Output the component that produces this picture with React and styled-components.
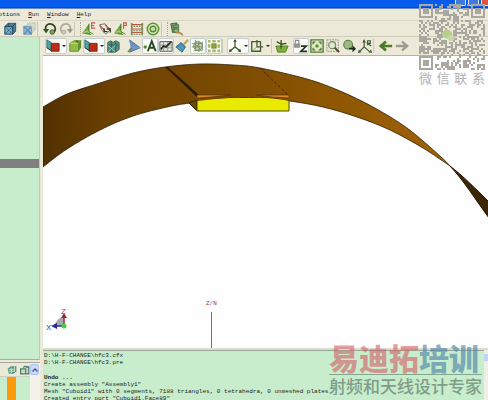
import React from 'react';
import styled, { createGlobalStyle, css } from 'styled-components';

const GlobalStyle = createGlobalStyle`
    * { box-sizing: border-box; }
    body { margin: 0; background: #ece9d8; overflow: hidden; }
    button { font: inherit; color: inherit; margin: 0; padding: 0; border: 0; background: none; }
`;

/* ---------- toolbar icons ---------- */

const Icon = ({ children }) => (
    <svg width="14" height="14" viewBox="0 0 16 16" fill="none" aria-hidden="true">{children}</svg>
);

const cubeIcon = (
    <Icon>
        <path d="M2 5l4-3.500h8.500v9L11 14H2z" fill="#4f7f9d" stroke="#2c5068" />
        <path d="M2 5h9v9M11 5l3.500-3.500M6 1.500v3.500" stroke="#27485c" />
        <path d="M3 6h7v7H3z" fill="#79aecb" />
        <path d="M3 6l7 7M10 6l-7 7M12 5v7" stroke="#33627e" />
    </Icon>
);
const meshCubeIcon = (
    <Icon>
        <path d="M5 4l3-3h7v8l-3 3H5z" fill="#d3dcd8" stroke="#c5c4a2" />
        <path d="M2 5h9v9H2z" fill="#8fb6d6" stroke="#6d96ba" />
        <path d="M2 5l9 9M11 5l-9 9" stroke="#5f8bb2" strokeWidth="1.400" />
        <path d="M6 1l9 8" stroke="#b9cbd2" />
    </Icon>
);
const undoIcon = (
    <Icon>
        <path d="M3 9C2 3 7 1 11 3s4 7 1 9" stroke="#33452a" strokeWidth="2" />
        <path d="M0 8h7l-3.500 5z" fill="#31591f" />
        <circle cx="10.500" cy="11.500" r="2.600" fill="#7ba856" stroke="#41582f" />
    </Icon>
);
const redoIcon = (
    <Icon>
        <path d="M13 9C14 3 9 1 5 3s-4 7-1 9" stroke="#aaa99e" strokeWidth="2" />
        <path d="M9 8h7l-3.500 5z" fill="#999a91" />
        <circle cx="5.500" cy="11.500" r="2.400" fill="#c6c5b9" stroke="#aaa99e" />
    </Icon>
);
const FieldIcon = ({ mark }) => (
    <Icon>
        <path d="M0 13L8 2v9l3 4z" fill="#5f9a2e" />
        <path d="M2 10l6 2M4 7l4 4M1 13l7-3" stroke="#b7d48d" />
        <path d="M8 2v9l5 3" stroke="#43751f" />
        {mark === 'E'
            ? <path d="M15 1h-4v6h4M11 4h3" stroke="#c9564d" strokeWidth="1.300" />
            : <path d="M11 8V1h3v3h-3" stroke="#c9564d" strokeWidth="1.300" />}
    </Icon>
);
const currentIcon = (
    <Icon>
        <path d="M2 3l6-1 6 7-5 5-5-5z" fill="#f4f1e6" stroke="#6c6b64" />
        <path d="M2 4l6 6M8 3l5 6" stroke="#b4574e" strokeWidth="1.400" />
        <path d="M7 7v4h4M10 8h4v4" stroke="#39342f" strokeWidth="1.500" />
    </Icon>
);
const gridLinesIcon = (
    <Icon>
        <path d="M2 1v14M14 1v14" stroke="#77925a" strokeWidth="2" />
        <path d="M2 3h12M2 8h12M2 12h12" stroke="#b45d3e" strokeWidth="1.300" />
        <path d="M4 5h8M4 10h8M4 14h8" stroke="#5c6d47" strokeDasharray="2 1" />
    </Icon>
);
const targetIcon = (
    <Icon>
        <circle cx="8" cy="8" r="6.500" stroke="#5c9436" strokeWidth="1.800" fill="#e3ecc8" />
        <circle cx="8" cy="8" r="3.200" stroke="#4e872a" strokeWidth="1.600" />
        <circle cx="8" cy="8" r="1" fill="#a2c77a" />
    </Icon>
);
const serverIcon = (
    <Icon>
        <path d="M2 2l7-1v10l-5 1z" fill="#6e9a5c" stroke="#3e5c34" />
        <path d="M5 4l6-1v9H6z" fill="#93b67f" stroke="#486a3b" />
        <path d="M6 6h4M6 8h4" stroke="#38532f" />
        <path d="M8 12h4l4 3" stroke="#ad8b4d" strokeWidth="2" />
    </Icon>
);
const planeIcon = (
    <Icon>
        <path d="M1 1l5 3v9l-5-3z" fill="#4ca7a0" stroke="#276b68" />
        <path d="M6 5h9v9H6z" fill="#bb2d18" stroke="#7c2113" />
        <path d="M1 10l6 4" stroke="#333" />
    </Icon>
);
const greenBoxIcon = (
    <Icon>
        <path d="M2 5l5-3h8l-3 3v9H2z" fill="#91bb45" stroke="#608b2b" />
        <path d="M12 5l3-3v8l-3 4z" fill="#628d2a" />
        <path d="M2 5h10" stroke="#c6dd87" />
        <path d="M9 2l3 2" stroke="#47731d" strokeWidth="2" />
    </Icon>
);
const meshedIcon = (
    <Icon>
        <path d="M2 4l3-2 3 2 3-2 4 2v8l-4 3H2z" fill="#548f80" stroke="#345e52" />
        <path d="M2 7h12M6 3v12M11 4v11" stroke="#2f5c50" />
        <path d="M2 7l9 8M11 7l-9 8" stroke="#a3ccd7" />
    </Icon>
);
const wedgeIcon = (
    <Icon>
        <path d="M3 1l12 9-12 5 2-5z" fill="#6e91bf" stroke="#4a6da0" />
        <path d="M3 1l2 9 10 0" stroke="#7f9dc8" />
        <path d="M1 15l4-5" stroke="#6a8a4e" strokeWidth="1.500" />
    </Icon>
);
const letterIcon = (
    <Icon>
        <circle cx="2.500" cy="9" r="2" fill="#588a33" />
        <path d="M5.500 14L10 2.500 14.500 14M7 10h6" stroke="#294a1d" strokeWidth="2.200" />
    </Icon>
);
const chartIcon = (
    <Icon>
        <path d="M1 3h14v11H1z" fill="#e6e9df" stroke="#454b42" />
        <path d="M1 7h14M1 10h14M5 3v11M10 3v11" stroke="#8b9386" />
        <path d="M2 12l3-4 3 1 6-6" stroke="#293027" strokeWidth="2" />
    </Icon>
);
const brushIcon = (
    <Icon>
        <path d="M10 6l5-5" stroke="#c4a362" strokeWidth="2.500" />
        <path d="M7 4l5 5-4 6-7-6z" fill="#418bb2" stroke="#2b6288" />
        <path d="M3 9l5 4M5 7l5 4" stroke="#78b4d1" />
    </Icon>
);
const globeGridIcon = (
    <Icon>
        <circle cx="8" cy="8" r="5" fill="#c5d7a9" stroke="#5e8946" />
        <path d="M1 5h12M1 9h13M3 13h10M5 1v13M9 2v13M13 3v10" stroke="#6b9278" />
        <path d="M4 5l7 7M11 4l-7 7" stroke="#ac7651" />
    </Icon>
);
const dotsIcon = (
    <Icon>
        <path d="M1 1h3v3H1zM6 1h4v3H6zM12 1h3v3h-3zM1 6h3v4H1zM12 6h3v4h-3zM1 12h3v3H1zM6 12h4v3H6zM12 12h3v3h-3z" fill="#a4bb65" />
        <path d="M5 5h6v6H5z" fill="#629042" />
        <path d="M5 8h6M8 5v6" stroke="#d3a147" />
    </Icon>
);
const axesIcon = (
    <Icon>
        <path d="M8 1v8M8 9l-6 5M8 9l6 5" stroke="#426334" strokeWidth="1.500" />
        <path d="M6 3l2-3 2 3zM1 15l1-4 3 3zM15 15l-1-4-3 3z" fill="#34502a" />
    </Icon>
);
const cornerIcon = (
    <Icon>
        <path d="M2 3h10v11H2z" fill="#eceedb" stroke="#455b32" strokeWidth="1.500" />
        <path d="M8 1v8h7" stroke="#455b32" strokeWidth="1.500" />
        <path d="M2 14l6-5" stroke="#779b52" />
    </Icon>
);
const workplaneIcon = (
    <Icon>
        <path d="M1 8h14l-3 7H3z" fill="#7fae3d" stroke="#537e25" />
        <path d="M7 11V1M7 6L2 3M7 6l6-1" stroke="#37511f" strokeWidth="1.500" />
    </Icon>
);
const lockIcon = (
    <Icon>
        <path d="M0 5h7v5H0z" fill="#8f958d" />
        <path d="M1.500 5V1.500h4V5" stroke="#878d86" strokeWidth="1.300" />
        <path d="M8 8h6l-6 6h7" stroke="#24331e" strokeWidth="2" />
    </Icon>
);
const zoomExtentIcon = (
    <Icon>
        <path d="M1 1h14v14H1z" fill="#dfe9c3" stroke="#557d38" strokeWidth="1.600" />
        <path d="M3.500 6V3.500H6M10 3.500h2.500V6M12.500 10v2.500H10M6 12.500H3.500V10" stroke="#487130" strokeWidth="1.400" />
        <circle cx="8" cy="8" r="2" fill="#5d9138" />
    </Icon>
);
const zoomBoxIcon = (
    <Icon>
        <path d="M1 1h13v13H1z" stroke="#7f8a66" strokeDasharray="2 1" />
        <circle cx="7" cy="7" r="4" fill="#dbe6cf" stroke="#6f8965" strokeWidth="1.300" />
        <path d="M10 10l5 5" stroke="#51443a" strokeWidth="2.200" />
    </Icon>
);
const zoomBallIcon = (
    <Icon>
        <circle cx="7" cy="6.500" r="5" fill="#9bbb81" stroke="#557c3f" strokeWidth="1.200" />
        <path d="M8 10h4V7l4 4-4 4v-3H8z" fill="#20271c" />
    </Icon>
);
const rotateIcon = (
    <Icon>
        <path d="M7 2v7L1 15M7 9l7 6M11 7V2h3v3h-3l4 3" stroke="#3c5f36" strokeWidth="1.400" />
        <path d="M5 4l2-4 2 4zM0 16l1-4 3 3zM16 16l-1-4-3 3z" fill="#3c5f36" />
    </Icon>
);
const backIcon = <Icon><path d="M15 8H3M8 3L2 8l6 5" stroke="#4c7b25" strokeWidth="3" /></Icon>;
const forwardIcon = <Icon><path d="M1 8h12M8 3l6 5-6 5" stroke="#9b9b91" strokeWidth="2.600" /></Icon>;

/* ---------- 3D scene ---------- */

// smooth curve through a list of points
function curve(pts) {
    let d = '';
    for (let i = 0; i < pts.length - 1; i++) {
        const [p0, p1, p2, p3] = [pts[i - 1] || pts[i], pts[i], pts[i + 1], pts[i + 2] || pts[i + 1]];
        d += `C${p1[0] + (p2[0] - p0[0]) / 6} ${p1[1] + (p2[1] - p0[1]) / 6} ${p2[0] - (p3[0] - p1[0]) / 6} ${p2[1] - (p3[1] - p1[1]) / 6} ${p2[0]} ${p2[1]}`;
    }
    return d;
}

const upper = [[43, 107], [67, 94], [100, 83], [133, 73], [165, 67], [200, 64], [233, 65], [260, 68], [307, 79], [340, 91], [373, 107], [407, 128], [440, 156], [450, 166]];
const lower = [[450, 166], [423, 148], [390, 130], [357, 117], [323, 107], [290, 101], [265, 98], [230, 98], [190, 103], [167, 107], [133, 116], [100, 130], [67, 149], [43, 167]];
const band = `M43 107${curve(upper)}${curve(lower)}Z`;

function Scene() {
    return (
        <SceneSvg viewBox="43 56 445 292" preserveAspectRatio="xMinYMin slice" role="img" aria-label="3D view">
            <defs>
                <linearGradient id="copper" x1="43" y1="150" x2="450" y2="150" gradientUnits="userSpaceOnUse">
                    <stop offset="0" stopColor="#523100" />
                    <stop offset="0.160" stopColor="#6b4000" />
                    <stop offset="0.450" stopColor="#7b4b02" />
                    <stop offset="0.700" stopColor="#8d5602" />
                    <stop offset="1" stopColor="#a16309" />
                </linearGradient>
            </defs>
            <path d={band} fill="url(#copper)" stroke="#2c1c05" strokeWidth="0.800" />
            <path d="M450 166C463 176 476 189 489 202V218C475 199 464 181 450 166Z" fill="#3d2605" stroke="#211403" />
            <path d="M189 103L197 100V111Z" fill="#6a4a08" stroke="#36270a" />
            <path d="M165 67L168 67L199 95L197 97Z" fill="#2c1b05" />
            <path d="M260 68L289 96" stroke="#3b250a" strokeDasharray="3 2" />
            <path d="M197 111V101Q212 99 230 98H265Q280 99 289 101V111Z" fill="#e9ea00" />
            <path d="M197 100V111H289V100" fill="none" stroke="#4a4907" />
            <path d="M197 98V95H231L211 97ZM289 98V95H256L272 97Z" fill="#dd8b2a" stroke="#5a350a" strokeWidth="0.700" />
            <text x="206" y="305" fill="#a33439" fontFamily="'Liberation Mono', monospace" fontSize="6">Z/N</text>
            <path d="M211.500 312V348" stroke="#bb535a" />
            <path d="M55 326A9 9 0 0 1 64 317V326Z" fill="#a8a8b0" />
            <path d="M64 326H54" stroke="#3434a0" strokeWidth="1.600" />
            <path d="M57 323V329L51 326Z" fill="#292995" />
            <path d="M64 326V316" stroke="#a73338" strokeWidth="1.600" />
            <path d="M61 318H67L64 313Z" fill="#942a30" />
            <circle cx="64" cy="326" r="2.500" fill="#45cf4a" />
            <text x="46" y="330" fill="#3636a5" fontFamily="'Liberation Sans', sans-serif" fontSize="8">X</text>
            <text x="61" y="314" fill="#bd4247" fontFamily="'Liberation Sans', sans-serif" fontSize="8">Z</text>
        </SceneSvg>
    );
}

/* ---------- QR stamp ---------- */

const SIZE = 33;
function qrPath() {
    let d = '';
    let seed = 77;
    const inFinder = (x, y) => (x < 8 && y < 8) || (x > SIZE - 9 && y < 8) || (x < 8 && y > SIZE - 9);
    for (let y = 0; y < SIZE; y++) {
        for (let x = 0; x < SIZE; x++) {
            seed = (seed * 1103515245 + 12345) % 2147483648;
            const centre = Math.abs(x - 14) < 3 && Math.abs(y - 15) < 3;
            if (!inFinder(x, y) && !centre && seed / 2147483648 < 0.5) d += `M${x} ${y}h1v1h-1z`;
        }
    }
    return d;
}

function Finder({ x, y }) {
    return (
        <g>
            <path d={`M${x + 0.5} ${y + 0.5}h6v6h-6z`} fill="none" stroke="#a9a7a0" />
            <path d={`M${x + 2} ${y + 2}h3v3h-3z`} fill="#a9a7a0" />
        </g>
    );
}

function QrStamp() {
    return (
        <Stamp>
            <svg width="66" height="66" viewBox="0 0 33 33" aria-hidden="true">
                <path d={qrPath()} fill="#a9a7a0" />
                <Finder x={0} y={0} />
                <Finder x={26} y={0} />
                <Finder x={0} y={26} />
                <ellipse cx="14" cy="15" rx="2.600" ry="2.200" fill="#b5ce8c" />
                <ellipse cx="16" cy="17" rx="1.800" ry="1.500" fill="#c5d8a5" />
            </svg>
            <StampText>
                {['微', '信', '联', '系'].map((c) => <span key={c}>{c}</span>)}
            </StampText>
        </Stamp>
    );
}

const mainTools = [
    { name: 'Solid', icon: cubeIcon }, { gap: 3 },
    { name: 'Mesh', icon: meshCubeIcon }, { gap: 5, line: true },
    { name: 'Undo', icon: undoIcon },
    { name: 'Redo', icon: redoIcon }, { gap: 7, line: true, grip: true },
    { name: 'Electric field', icon: <FieldIcon mark="E" /> },
    { name: 'Currents', icon: currentIcon },
    { name: 'Power', icon: <FieldIcon mark="P" /> },
    { name: 'Lines', icon: gridLinesIcon },
    { name: 'Far field', icon: targetIcon }, { gap: 7, line: true, grip: true },
    { name: 'Solver', icon: serverIcon },
];

const viewTools = [
    { name: 'Plane', icon: planeIcon, on: true, menu: true },
    { name: 'Box', icon: greenBoxIcon },
    { name: 'Face', icon: planeIcon, on: true, menu: true },
    { name: 'Show mesh', icon: meshedIcon }, { gap: 5 },
    { name: 'Wedge', icon: wedgeIcon },
    { name: 'Labels', icon: letterIcon, on: true },
    { name: 'Chart', icon: chartIcon, on: true },
    { name: 'Paint', icon: brushIcon },
    { name: 'Sphere grid', icon: globeGridIcon, on: true },
    { name: 'Points', icon: dotsIcon, on: true }, { gap: 5, line: true },
    { name: 'Axes', icon: axesIcon, on: true, menu: true },
    { name: 'View', icon: cornerIcon, menu: true }, { gap: 3, line: true },
    { name: 'Workplane', icon: workplaneIcon }, { gap: 3 },
    { name: 'Lock Z', icon: lockIcon, on: true },
    { name: 'Zoom to extents', icon: zoomExtentIcon },
    { name: 'Zoom area', icon: zoomBoxIcon },
    { name: 'Zoom', icon: zoomBallIcon },
    { name: 'Rotate', icon: rotateIcon }, { gap: 5, line: true },
    { name: 'Back', icon: backIcon },
    { name: 'Forward', icon: forwardIcon },
];

function Tools({ items }) {
    return items.map((t, i) => (
        t.gap
            ? <Separator key={i} $width={t.gap} $line={t.line} $grip={t.grip} />
            : (
                <ToolButton key={i} type="button" aria-label={t.name} $on={t.on} $menu={t.menu}>
                    {t.icon}
                    {t.menu && <Caret />}
                </ToolButton>
            )
    ));
}

function App() {
    return (
        <Window>
            <GlobalStyle />
            <TitleBar>
                <TitleButton type="button" aria-label="Minimize" />
                <TitleButton type="button" aria-label="Restore" />
                <TitleButton type="button" aria-label="Close" $close />
            </TitleBar>
            <MenuBar>
                <MenuItem type="button"><u>O</u>ptions</MenuItem>
                <MenuItem type="button"><u>R</u>un</MenuItem>
                <MenuItem type="button"><u>W</u>indow</MenuItem>
                <MenuItem type="button"><u>H</u>elp</MenuItem>
            </MenuBar>
            <MainToolbar><Tools items={mainTools} /></MainToolbar>
            <Body>
                <Side>
                    <Tree><Selected /></Tree>
                    <Details>
                        <DetailsMain>
                            <DetailsHead>
                                <svg width="10" height="10" viewBox="0 0 16 16" aria-hidden="true">
                                    <path d="M1 6l5-4h9v8l-4 4H3z" fill="#5b9a84" />
                                    <path d="M3 7h8M3 10h8M7 5v8M12 3v8" stroke="#d1e2bf" strokeWidth="1.500" />
                                </svg>
                                <svg width="10" height="10" viewBox="0 0 16 16" aria-hidden="true">
                                    <path d="M1 6h8v8H1zM9 3h5v11H9" fill="#cfdcc8" stroke="#49816b" strokeWidth="2" />
                                    <path d="M5 4l3-2 5 2" fill="none" stroke="#49816b" strokeWidth="2" />
                                </svg>
                            </DetailsHead>
                            <OrangeColumn />
                        </DetailsMain>
                        <SideScroll>
                            <ScrollButton type="button" aria-label="Scroll up">
                                <svg width="6" height="4" viewBox="0 0 6 4" aria-hidden="true">
                                    <path d="M0.500 3.500L3 1L5.500 3.500" fill="none" stroke="#4a5f8c" strokeWidth="1.400" />
                                </svg>
                            </ScrollButton>
                        </SideScroll>
                    </Details>
                </Side>
                <Work>
                    <ViewToolbar><Tools items={viewTools} /></ViewToolbar>
                    <Viewport><Scene /></Viewport>
                    <Console>
                        <Log>
                            <p>D:\H-F-CHANGE\hfc3.cfx</p>
                            <p>D:\H-F-CHANGE\hfc3.pre</p>
                            <Undo>Undo ...</Undo>
                            <p>Create assembly "Assembly1"</p>
                            <p>Mesh "Cuboid1" with 0 segments, 7188 triangles, 0 tetrahedra, 0 unmeshed plates.</p>
                            <p>Created entry port "Cuboid1.Face89"</p>
                        </Log>
                        <LogScroll />
                    </Console>
                </Work>
            </Body>
            <QrStamp />
            <Brand>
                <BrandName><span>易迪拓</span><BrandBlue>培训</BrandBlue></BrandName>
                <BrandLine>射频和天线设计专家</BrandLine>
            </Brand>
        </Window>
    );
}

const cjk = css`font-family: 'Noto Sans CJK SC', sans-serif;`;

const Window = styled.div`
    position: relative;
    display: flex;
    flex-direction: column;
    height: 100vh;
    overflow: hidden;
    background: #ece9d8;
    font: 6px/8px 'Liberation Mono', monospace;
    color: #222;
`;

const TitleBar = styled.header`
    display: flex;
    justify-content: flex-end;
    gap: 2px;
    height: 9px;
    background: linear-gradient(#0758e8, #0560f2 70%, #0a3fae 90%, #e2e4e4);
`;

const TitleButton = styled.button`
    width: 11px;
    height: 6px;
    border: 1px solid #dbe6fa;
    border-top: 0;
    border-radius: 0 0 2px 2px;
    background: ${(p) => (p.$close ? '#e0563a' : '#4379dd')};
    &:last-child { margin-right: -4px; }
`;

const MenuBar = styled.nav`
    display: flex;
    align-items: center;
    gap: 8px;
    height: 11px;
    margin-left: -5px;
`;

const MenuItem = styled.button`
    flex: none;
`;

const MainToolbar = styled.div`
    display: flex;
    align-items: center;
    height: 17px;
    padding-left: 2px;
    border-top: 1px solid #dad6c5;
    border-bottom: 1px solid #cfccbb;
`;

const ViewToolbar = styled.div`
    display: flex;
    align-items: center;
    flex: none;
    height: 19px;
    padding-left: 2px;
    border-bottom: 1px solid #b5b3a6;
`;

const ToolButton = styled.button`
    display: flex;
    align-items: center;
    justify-content: center;
    flex: none;
    width: ${(p) => (p.$menu ? 22 : 16)}px;
    height: 16px;
    border: 1px solid ${(p) => (p.$on ? '#c3ced2' : 'transparent')};
    border-radius: 2px;
    background: ${(p) => (p.$on ? '#fbfbf8' : 'transparent')};
    svg { flex: none; }
`;

const Caret = styled.i`
    margin: 0 1px 0 2px;
    border: 2px solid transparent;
    border-top-color: #222;
    border-bottom: 0;
`;

const Separator = styled.span`
    flex: none;
    width: ${(p) => p.$width}px;
    height: 14px;
    border-left: ${(p) => (p.$line ? '1px solid #cbc8b6' : '0')};
    border-right: ${(p) => (p.$grip ? '1px dotted #aaa798' : '0')};
`;

const Body = styled.div`
    display: flex;
    flex: 1;
    min-height: 0;
`;

const Side = styled.aside`
    display: flex;
    flex-direction: column;
    flex: none;
    width: 43px;
    padding-right: 3px;
`;

const Tree = styled.div`
    flex: 1;
    padding-top: 122px;
    background: #c7edcc;
    border-right: 1px solid #b9cdb7;
    border-bottom: 1px solid #a9aea0;
`;

const Selected = styled.div`
    height: 9px;
    background: #808080;
`;

const Details = styled.div`
    display: flex;
    height: 38px;
    margin-top: 2px;
    border-top: 1px solid #a7a79b;
`;

const DetailsMain = styled.div`
    flex: 1;
    background: #c7edcc;
`;

const DetailsHead = styled.div`
    display: flex;
    align-items: center;
    justify-content: flex-end;
    gap: 3px;
    height: 14px;
    background: #ece9d8;
    border-bottom: 1px solid #d2cfbe;
`;

const OrangeColumn = styled.div`
    width: 9px;
    height: 24px;
    margin-left: 7px;
    background: #f99b0c;
`;

const SideScroll = styled.div`
    width: 10px;
    padding-top: 1px;
    background: #f2f1ea;
`;

const ScrollButton = styled.button`
    display: flex;
    align-items: center;
    justify-content: center;
    width: 9px;
    height: 11px;
    border: 1px solid #b2c4ef;
    border-radius: 2px;
    background: #c9d7fa;
`;

const Work = styled.main`
    display: flex;
    flex-direction: column;
    flex: 1;
    min-width: 0;
`;

const Viewport = styled.section`
    flex: 1;
    min-height: 0;
    background: #fefefe;
`;

const SceneSvg = styled.svg`
    display: block;
    width: 100%;
    height: 100%;
`;

const Console = styled.section`
    display: flex;
    flex: none;
    height: 52px;
    border-top: 2px solid #dcdccd;
`;

const Log = styled.div`
    flex: 1;
    overflow: hidden;
    padding: 1px;
    background: #c7edcc;
    border-top: 1px solid #93a794;
    white-space: nowrap;
    line-height: 7px;
    p { margin: 0; }
`;

const Undo = styled.div`
    margin-top: 8px;
    font-weight: bold;
`;

const LogScroll = styled.div`
    width: 4px;
    background: linear-gradient(#f0efe6 4px, #c3d3f8 4px, #c3d3f8 11px, #f0efe6 11px);
`;

const Stamp = styled.div`
    position: absolute;
    top: 4px;
    right: 3px;
    width: 66px;
    svg { display: block; }
`;

const StampText = styled.div`
    display: flex;
    justify-content: space-between;
    ${cjk}
    font-size: 13px;
    line-height: 16px;
    color: #b2b2b2;
`;

const Brand = styled.div`
    position: absolute;
    right: 6px;
    bottom: 4px;
    ${cjk}
`;

const BrandName = styled.div`
    padding-bottom: 2px;
    border-bottom: 1px solid #84a68c;
    font-size: 30px;
    font-weight: 900;
    line-height: 30px;
    color: rgba(211, 92, 100, 0.6);
`;

const BrandBlue = styled.span`
    color: rgba(75, 130, 170, 0.65);
`;

const BrandLine = styled.div`
    font-size: 17px;
    font-weight: 500;
    line-height: 21px;
    color: #7f9d88;
`;

export default App;
